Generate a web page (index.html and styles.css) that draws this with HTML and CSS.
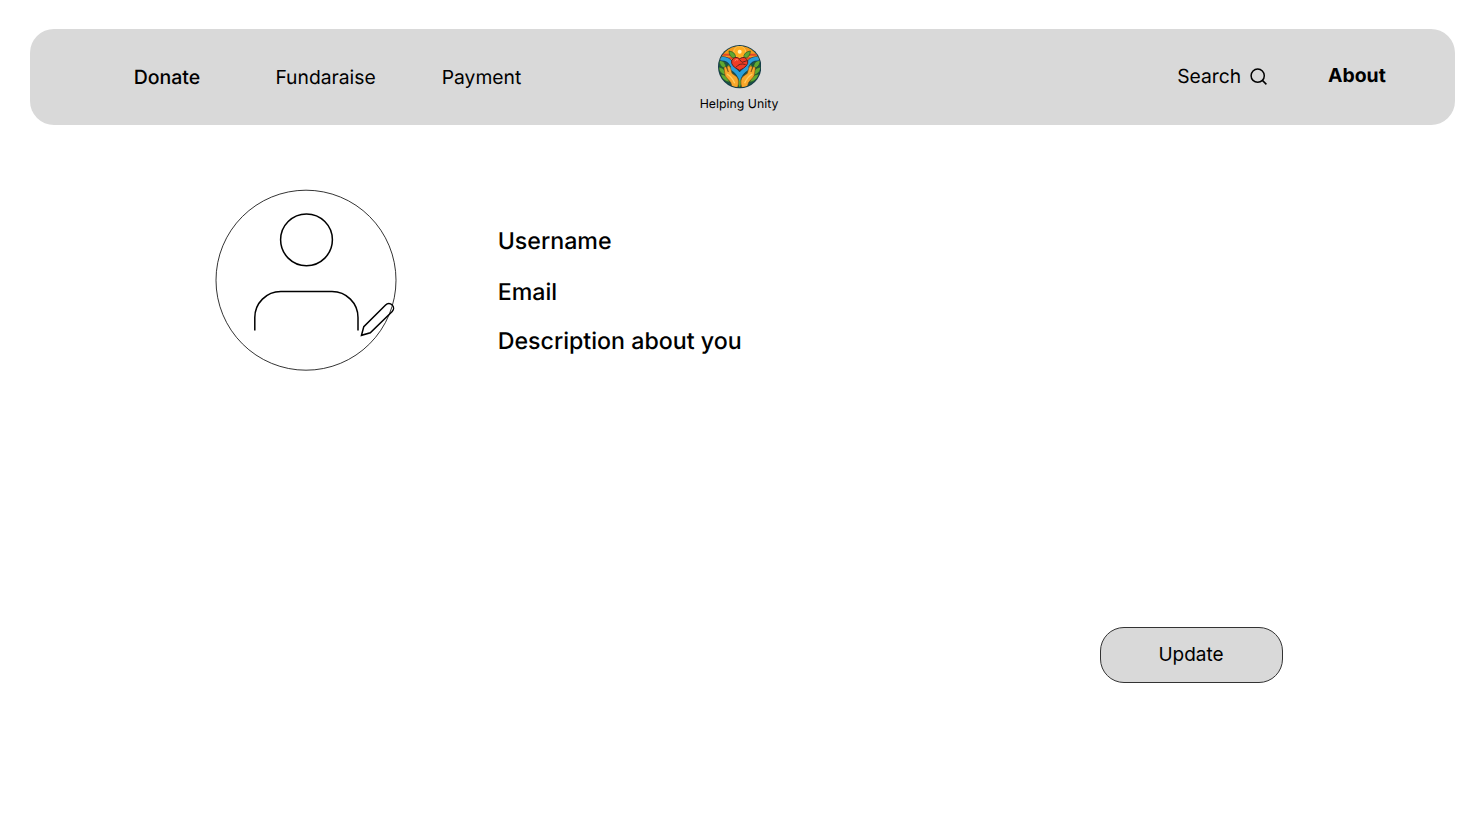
FILE: index.html
```html
<!DOCTYPE html>
<html lang="en">
<head>
<meta charset="utf-8">
<title>Helping Unity</title>
<link rel="stylesheet" href="styles.css">
</head>
<body>
<header class="bar">
  <nav class="nav">
    <a class="link donate">Donate</a>
    <a class="link fund">Fundaraise</a>
    <a class="link pay">Payment</a>
  </nav>
  <div class="brand">
    <svg class="logo" viewBox="-2 1 132 132">
      <defs><clipPath id="disc"><circle cx="66" cy="66" r="62"/></clipPath></defs>
      <circle cx="66" cy="66" r="65" fill="#153c48"/>
      <g clip-path="url(#disc)">
        <rect width="132" height="132" fill="#1c5548"/>
        <path d="M0 0H132V46H0Z" fill="#f39a1c"/>
        <path d="M4 30H48M84 30H128M4 41H45M87 41H128" stroke="#e2492a" stroke-width="6"/>
        <circle cx="66" cy="22" r="18" fill="#ffac20" stroke="#f7c65c" stroke-width="3"/>
        <circle cx="66" cy="21" r="6" fill="#fff0b0"/>
        <g fill="#60a932" stroke="#215526" stroke-width="2">
          <path d="M54 41Q34 40 34 19Q55 22 54 41Z"/>
          <path d="M78 41Q98 40 98 19Q77 22 78 41Z"/>
          <path d="M24 72Q2 65 5 44Q27 52 24 72Z"/>
          <path d="M108 72Q130 65 127 44Q105 52 108 72Z"/>
          <path d="M27 93Q3 87 3 67Q26 71 27 93Z"/>
          <path d="M105 93Q129 87 129 67Q106 71 105 93Z"/>
          <path d="M36 113Q12 108 8 88Q32 90 36 113Z"/>
          <path d="M96 113Q120 108 124 88Q100 90 96 113Z"/>
          <path d="M28 80Q24 62 37 56Q47 72 28 80Z"/>
          <path d="M104 80Q108 62 95 56Q85 72 104 80Z"/>
          <path d="M66 96Q78 112 66 130Q54 112 66 96Z"/>
        </g>
        <g fill="none" stroke-linecap="round">
          <path d="M12 42Q34 42 43 61Q50 77 66 91Q82 77 89 61Q98 42 120 42" stroke="#123c56" stroke-width="15"/>
          <path d="M12 42Q34 42 43 61Q50 77 66 91Q82 77 89 61Q98 42 120 42" stroke="#2b9fd8" stroke-width="11"/>
          <path d="M42 72Q58 80 66 98Q74 80 90 72" stroke="#2b9fd8" stroke-width="9"/>
        </g>
        <path d="M66 77Q38 64 42 48Q50 32 66 42Q82 32 90 48Q94 64 66 77Z" fill="#f03c26" stroke="#632018" stroke-width="3"/>
        <path d="M51 49Q55 42 61 46" fill="none" stroke="#ff9c78" stroke-width="3"/>
        <path d="M65 44L73 53L88 48M54 69Q66 53 84 60" fill="none" stroke="#6b231b" stroke-width="3"/>
        <g fill="#f9a72b" stroke="#713b16" stroke-width="1.5">
          <path d="M20 77Q17 65 25 66L32 82L28 67Q32 61 38 68L43 86L57 96Q66 106 60 128H43Q42 112 30 103Q20 96 20 77Z"/>
          <path d="M112 77Q115 65 107 66L100 82L104 67Q100 61 94 68L89 86L75 96Q66 106 72 128H89Q90 112 102 103Q112 96 112 77Z"/>
        </g>
        <path d="M28 88Q44 97 51 116M104 88Q88 97 81 116" fill="none" stroke="#ffcd63" stroke-width="4"/>
      </g>
    </svg>
    <span class="name">Helping Unity</span>
  </div>
  <div class="tools">
    <a class="link search">Search</a>
    <svg class="glass" viewBox="0 0 20 20"><circle cx="8.7" cy="8.7" r="6.6"/><path d="M13.4 13.4L17.4 17.4"/></svg>
    <a class="link about">About</a>
  </div>
</header>
<main class="profile">
  <svg class="avatar" viewBox="0 0 184 184">
    <circle class="ring" cx="92" cy="92.2" r="90"/>
    <circle cx="92.5" cy="51.8" r="25.9"/>
    <path d="M40.8 142.6V129.5A26 26 0 0 1 66.8 103.5H118A26 26 0 0 1 144 129.5V142.6"/>
    <path d="M147.5 147.3L149.8 138.6L171.6 117A4.6 4.6 0 0 1 178.2 123.5L156.3 144.8Z"/>
  </svg>
  <div class="fields">
    <div class="field">Username</div>
    <div class="field">Email</div>
    <div class="field">Description about you</div>
  </div>
</main>
<div class="actions"><button class="update">Update</button></div>
</body>
</html>
```
FILE: styles.css
```css
* { box-sizing: border-box; }
body {
  margin: 0;
  padding: 29px 26px 0 30px;
  height: 830px;
  overflow: hidden;
  background: #fff;
  color: #000;
  font-family: Inter, sans-serif;
  text-rendering: geometricPrecision;
}
.bar {
  display: flex;
  height: 96px;
  border-radius: 24px;
  background: #d9d9d9;
}
.nav { display: flex; width: 670px; padding: 36px 0 0 103.7px; }
.link { font-size: 19.3px; line-height: 24px; white-space: nowrap; }
.donate { width: 141.7px; font-size: 19.5px; font-weight: 500; }
.fund { width: 166.4px; }
.brand {
  display: flex;
  flex-direction: column;
  align-items: center;
  width: 78px;
  padding-top: 16px;
}
.logo { width: 44px; height: 44px; flex: none; }
.name { margin-top: 7px; font-size: 12.3px; line-height: 15px; white-space: nowrap; }
.tools { display: flex; align-items: flex-start; padding: 35px 0 0 399.2px; }
.search { width: 71.8px; }
.glass { width: 20px; height: 20px; margin: 2.6px 59px 0 0; flex: none; }
.glass, .avatar { fill: none; stroke: #000; stroke-width: 1.5; }
.about { margin-top: -0.6px; font-size: 19.4px; font-weight: 700; }
.profile { display: flex; padding: 63px 0 0 184px; }
.avatar { width: 184px; height: 184px; flex: none; }
.ring { stroke-width: 0.8; }
.fields { display: flex; flex-direction: column; gap: 21.4px; padding: 39.4px 0 0 99.7px; }
.field { font-size: 23.2px; line-height: 29px; font-weight: 500; white-space: nowrap; }
.field:last-child { margin-top: -1.2px; }
.actions { display: flex; justify-content: flex-end; margin: 255px 172px 0 0; }
.update {
  width: 183px;
  height: 56px;
  padding: 0 1px 1px 0;
  border: 1px solid #333;
  border-radius: 24px;
  background: #d9d9d9;
  color: #000;
  font: 400 19px/24px Inter, sans-serif;
}
```
